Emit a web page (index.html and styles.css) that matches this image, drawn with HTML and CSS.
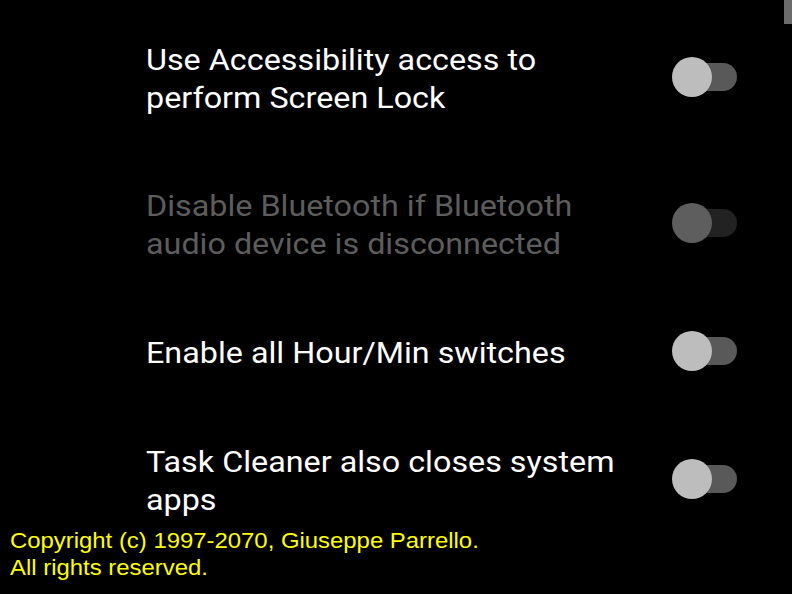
FILE: index.html
```html
<!DOCTYPE html>
<html>
<head>
<meta charset="utf-8">
<link rel="stylesheet" href="styles.css">
</head>
<body>
<div class="screen">
  <div class="scrollbar"></div>
  <div class="list">
    <div class="row two">
      <div class="label">Use Accessibility access to<br>perform Screen Lock</div>
      <div class="switch"><div class="track"></div><div class="thumb"></div></div>
    </div>
    <div class="row two disabled">
      <div class="label">Disable Bluetooth if Bluetooth<br>audio device is disconnected</div>
      <div class="switch"><div class="track"></div><div class="thumb"></div></div>
    </div>
    <div class="row one">
      <div class="label">Enable all Hour/Min switches</div>
      <div class="switch"><div class="track"></div><div class="thumb"></div></div>
    </div>
    <div class="row two">
      <div class="label">Task Cleaner also closes system<br>apps</div>
      <div class="switch"><div class="track"></div><div class="thumb"></div></div>
    </div>
    <div class="row two">
      <div class="label">Update widgets when screen is<br>unlocked</div>
      <div class="switch"><div class="track"></div><div class="thumb"></div></div>
    </div>
  </div>
  <div class="copyright">Copyright (c) 1997-2070, Giuseppe Parrello.<br>All rights reserved.</div>
</div>
</body>
</html>
```
FILE: styles.css
```css
html, body {
  margin: 0;
  padding: 0;
  background: #000;
}
.screen {
  position: relative;
  width: 792px;
  height: 594px;
  overflow: hidden;
  background: #000;
}
.scrollbar {
  position: absolute;
  top: 0;
  right: 0;
  width: 8px;
  height: 24px;
  background: #6b6b6b;
}
.list {
  display: flex;
  flex-direction: column;
  padding-top: 4px;
}
.row {
  display: flex;
  align-items: center;
  justify-content: space-between;
  padding: 35px 55px 35px 146px;
}
.label {
  font-family: Roboto, sans-serif;
  font-size: 29px;
  line-height: 38px;
  color: #ffffff;
  transform-origin: left center;
  transform: translateY(2px) scaleX(1.114);
}
.disabled .label {
  color: #5d5d5d;
}
.switch {
  position: relative;
  width: 65px;
  height: 40px;
  flex: none;
}
.track {
  position: absolute;
  left: 8px;
  right: 0;
  top: 6px;
  height: 28px;
  border-radius: 14px;
  background: #595959;
}
.thumb {
  position: absolute;
  left: 0;
  top: 0;
  width: 40px;
  height: 40px;
  border-radius: 50%;
  background: #bdbdbd;
}
.disabled .track {
  background: #222222;
}
.disabled .thumb {
  background: #5e5e5e;
}
.copyright {
  position: absolute;
  left: 10px;
  top: 527px;
  font-family: "Liberation Sans", Arial, sans-serif;
  font-size: 22px;
  line-height: 27px;
  color: #ffff00;
  transform-origin: left top;
  transform: scaleX(1.086);
}
```
